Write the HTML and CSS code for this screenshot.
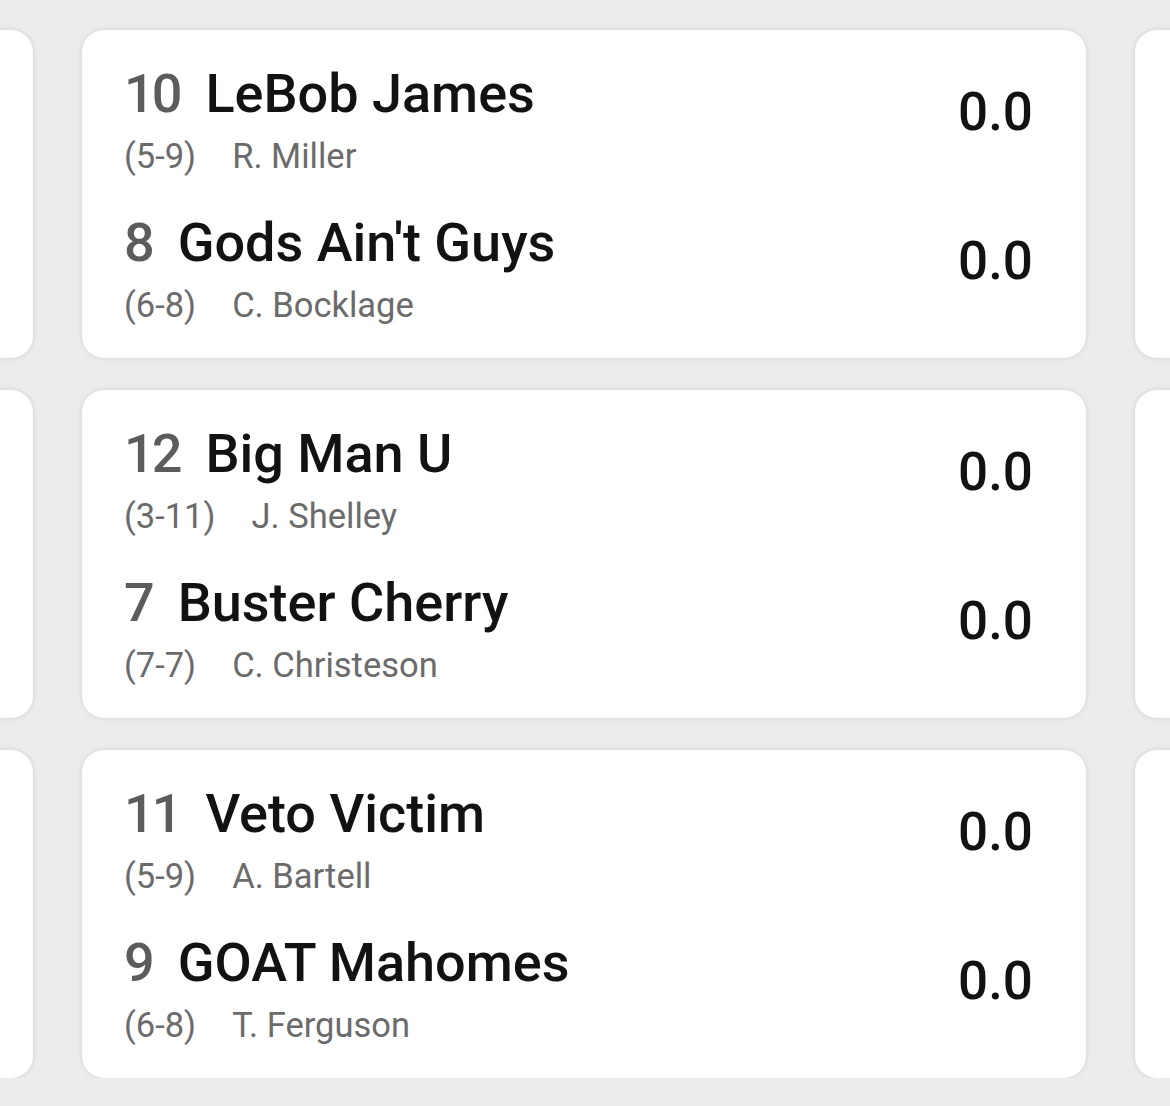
FILE: index.html
```html
<!doctype html>
<html lang="en">
  <head>
    <meta charset="UTF-8" />
    <meta name="viewport" content="width=device-width, initial-scale=1.0" />
    <title>Matchups</title>
    <link rel="stylesheet" href="styles.css">
  </head>
  <body>
    <div class="scoreboard">
      <div class="matchup-row">
        <div class="matchup-card"></div>
        <div class="matchup-card">
          <div class="team">
            <div class="team-info">
              <div class="team-name"><span class="rank">10</span>LeBob James</div>
              <div class="team-meta"><span>(5-9)</span><span>R. Miller</span></div>
            </div>
            <div class="score">0.0</div>
          </div>
          <div class="team">
            <div class="team-info">
              <div class="team-name"><span class="rank">8</span>Gods Ain't Guys</div>
              <div class="team-meta"><span>(6-8)</span><span>C. Bocklage</span></div>
            </div>
            <div class="score">0.0</div>
          </div>
        </div>
        <div class="matchup-card"></div>
      </div>

      <div class="matchup-row">
        <div class="matchup-card"></div>
        <div class="matchup-card">
          <div class="team">
            <div class="team-info">
              <div class="team-name"><span class="rank">12</span>Big Man U</div>
              <div class="team-meta"><span>(3-11)</span><span>J. Shelley</span></div>
            </div>
            <div class="score">0.0</div>
          </div>
          <div class="team">
            <div class="team-info">
              <div class="team-name"><span class="rank">7</span>Buster Cherry</div>
              <div class="team-meta"><span>(7-7)</span><span>C. Christeson</span></div>
            </div>
            <div class="score">0.0</div>
          </div>
        </div>
        <div class="matchup-card"></div>
      </div>

      <div class="matchup-row">
        <div class="matchup-card"></div>
        <div class="matchup-card">
          <div class="team">
            <div class="team-info">
              <div class="team-name"><span class="rank">11</span>Veto Victim</div>
              <div class="team-meta"><span>(5-9)</span><span>A. Bartell</span></div>
            </div>
            <div class="score">0.0</div>
          </div>
          <div class="team">
            <div class="team-info">
              <div class="team-name"><span class="rank">9</span>GOAT Mahomes</div>
              <div class="team-meta"><span>(6-8)</span><span>T. Ferguson</span></div>
            </div>
            <div class="score">0.0</div>
          </div>
        </div>
        <div class="matchup-card"></div>
      </div>
    </div>
  </body>
</html>
```

FILE: styles.css
```css
html,
body {
  margin: 0;
  padding: 0;
  overflow: hidden;
}

body {
  font-family: Roboto, "Liberation Sans", sans-serif;
  background: #ececee;
  color: #121212;
}

.scoreboard {
  padding-top: 30px;
  display: flex;
  flex-direction: column;
  gap: 32px;
}

.matchup-row {
  display: grid;
  grid-template-columns: repeat(3, 1004px);
  column-gap: 49px;
  margin-left: -971px;
}

.matchup-card {
  background: white;
  border-radius: 22px;
  box-shadow: 0 0 5px rgba(0, 0, 0, 0.12);
  height: 328px;
  box-sizing: border-box;
  padding: 33.5px 53px 31.5px 42px;
  display: flex;
  flex-direction: column;
  gap: 37px;
}

.team {
  display: flex;
  justify-content: space-between;
  align-items: flex-start;
}

.team-name {
  font-size: 54px;
  line-height: 60px;
  font-weight: 500;
  white-space: nowrap;
}

.rank {
  color: #5c5c5c;
  letter-spacing: -3px;
  margin-right: 26px;
}

.team-meta {
  margin-top: 12px;
  font-size: 34.5px;
  line-height: 40px;
  color: #6b6b6b;
  display: flex;
  gap: 36px;
}

.score {
  margin-top: 18px;
  font-size: 53px;
  line-height: 60px;
  font-weight: 500;
}
```
